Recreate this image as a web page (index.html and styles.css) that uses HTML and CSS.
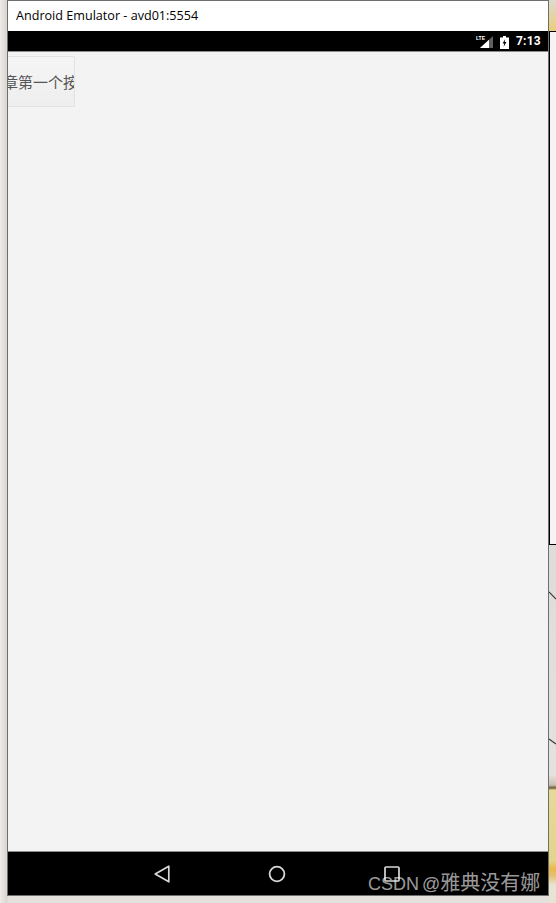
FILE: index.html
```html
<!DOCTYPE html>
<html lang="en">
<head>
    <meta charset="UTF-8">
    <meta name="viewport" content="width=device-width, initial-scale=1.0">
    <title>Android Emulator</title>
    <link rel="stylesheet" href="styles.css">
</head>
<body>
    <div class="desktop-strip">
        <div class="strip-top"></div>
        <div class="strip-paper"></div>
        <div class="strip-photo">
            <svg class="strip-curves" width="7" height="358" viewBox="0 0 7 358">
                <path d="M0 47 L7 54" stroke="#3c3c3c" stroke-width="1.2" fill="none"/>
                <path d="M0 194 L7 199" stroke="#3c3c3c" stroke-width="1.2" fill="none"/>
            </svg>
        </div>
    </div>

    <div class="window">
        <div class="title-bar">Android Emulator - avd01:5554</div>

        <div class="status-bar">
            <span class="lte">LTE</span>
            <svg class="signal" width="13" height="12" viewBox="0 0 13 12">
                <path d="M13 0 V12 H0 Z" fill="#5f5f5f"/>
                <path d="M9 3.7 V12 H0 Z" fill="#fff"/>
            </svg>
            <svg class="battery" width="9" height="13" viewBox="0 0 9 13">
                <path d="M3 0 H6 V1.5 H9 V13 H0 V1.5 H3 Z" fill="#fff"/>
                <path d="M5.2 3 L2.6 7.4 H4.2 L3.6 11 L6.4 6 H4.7 Z" fill="#000"/>
            </svg>
            <span class="clock">7:13</span>
        </div>

        <div class="screen">
            <div class="app-button"><span class="app-button-text">章第一个按钮</span></div>
        </div>

        <div class="nav-bar">
            <svg class="nav-icon" width="16" height="18" viewBox="0 0 16 18">
                <path d="M14.8 1.2 V16.8 L1.2 9 Z" fill="none" stroke="#d8d8d8" stroke-width="1.7" stroke-linejoin="round"/>
            </svg>
            <svg class="nav-icon" width="18" height="18" viewBox="0 0 18 18">
                <circle cx="9" cy="9" r="7.4" fill="none" stroke="#d8d8d8" stroke-width="1.8"/>
            </svg>
            <svg class="nav-icon" width="16" height="16" viewBox="0 0 16 16">
                <rect x="1" y="1" width="14" height="14" rx="1" fill="none" stroke="#d8d8d8" stroke-width="1.7"/>
            </svg>
        </div>
    </div>

    <div class="watermark">CSDN @<span class="watermark-name">雅典没有娜</span></div>
</body>
</html>
```

FILE: styles.css
```css
html, body {
    height: 100%;
}
body {
    margin: 0;
    position: relative;
    height: 903px;
    overflow: hidden;
    background: linear-gradient(to right, #efece8, #d9d6d1 7px, #e4e1dc 8px);
    font-family: "Noto Sans CJK SC", "Liberation Sans", sans-serif;
}
.window {
    width: 542px;
    height: 896px;
    margin-left: 7px;
    border: 1px solid #6e6e6e;
    box-sizing: border-box;
    display: flex;
    flex-direction: column;
}
.title-bar {
    height: 30px;
    padding-left: 8px;
    background: #fff;
    color: #000;
    font-family: "Open Sans", "Liberation Sans", sans-serif;
    font-size: 12.6px;
    line-height: 30px;
}
.status-bar {
    height: 21px;
    box-sizing: border-box;
    background: #000;
    display: flex;
    align-items: center;
    justify-content: flex-end;
    padding-right: 8px;
    border-bottom: 1px solid #8c8c8c;
    color: #fff;
}
.lte {
    font-family: "Liberation Sans", sans-serif;
    font-size: 5px;
    font-weight: bold;
    margin-right: -5px;
    align-self: flex-start;
    margin-top: 4px;
    line-height: 6px;
}
.signal {
    margin-right: 7px;
    margin-top: 2px;
}
.battery {
    margin-right: 7px;
    margin-top: 2px;
}
.clock {
    width: 24px;
    font-family: "Roboto", "Liberation Sans", sans-serif;
    font-size: 12px;
    font-weight: 700;
    letter-spacing: 0.2px;
    white-space: nowrap;
}
.screen {
    flex: 1;
    background: #f3f3f3;
    padding-top: 4px;
}
.app-button {
    width: 67px;
    height: 51px;
    box-sizing: border-box;
    background: linear-gradient(to bottom, #f5f5f5, #eeeeee);
    border: 1px solid #e2e2e2;
    border-left: none;
    border-radius: 0 2px 2px 0;
    overflow: hidden;
    display: flex;
    align-items: center;
    color: #555;
    font-size: 15px;
    white-space: nowrap;
}
.app-button-text {
    flex-shrink: 0;
    margin-left: -5px;
}
.nav-bar {
    height: 44px;
    background: #000;
    border-top: 1px solid #8c8c8c;
    box-sizing: border-box;
    display: flex;
    align-items: center;
    justify-content: center;
    gap: 98px;
    padding-right: 2px;
}
.nav-icon {
    display: block;
}
.desktop-strip {
    position: absolute;
    left: 549px;
    top: 0;
    width: 7px;
    height: 903px;
    display: flex;
    flex-direction: column;
}
.strip-top {
    height: 31px;
    background: linear-gradient(to bottom, #dedad0, #e8cf7a);
}
.strip-paper {
    height: 515px;
    background: #f4f4f4;
    border-top: 1px solid #000;
    border-bottom: 1px solid #000;
    border-left: 1px solid #000;
    box-sizing: border-box;
}
.strip-photo {
    flex: 1;
    background: linear-gradient(to bottom, #dedcd8 0, #e4e2de 230px, #c9c0b4 240px, #6b5c30 243px, #e5da98 245px, #e3d48a 316px, #eab84a 324px, #e3c274 331px, #e8e4d4 340px);
}
.strip-curves {
    display: block;
}
.watermark {
    position: absolute;
    left: 368px;
    top: 871px;
    color: rgba(255, 255, 255, 0.62);
    font-family: "Liberation Sans", "Noto Sans CJK SC", sans-serif;
    font-size: 18px;
    line-height: 24px;
    word-spacing: -2px;
    white-space: nowrap;
}
.watermark-name {
    font-size: 20px;
}
```
